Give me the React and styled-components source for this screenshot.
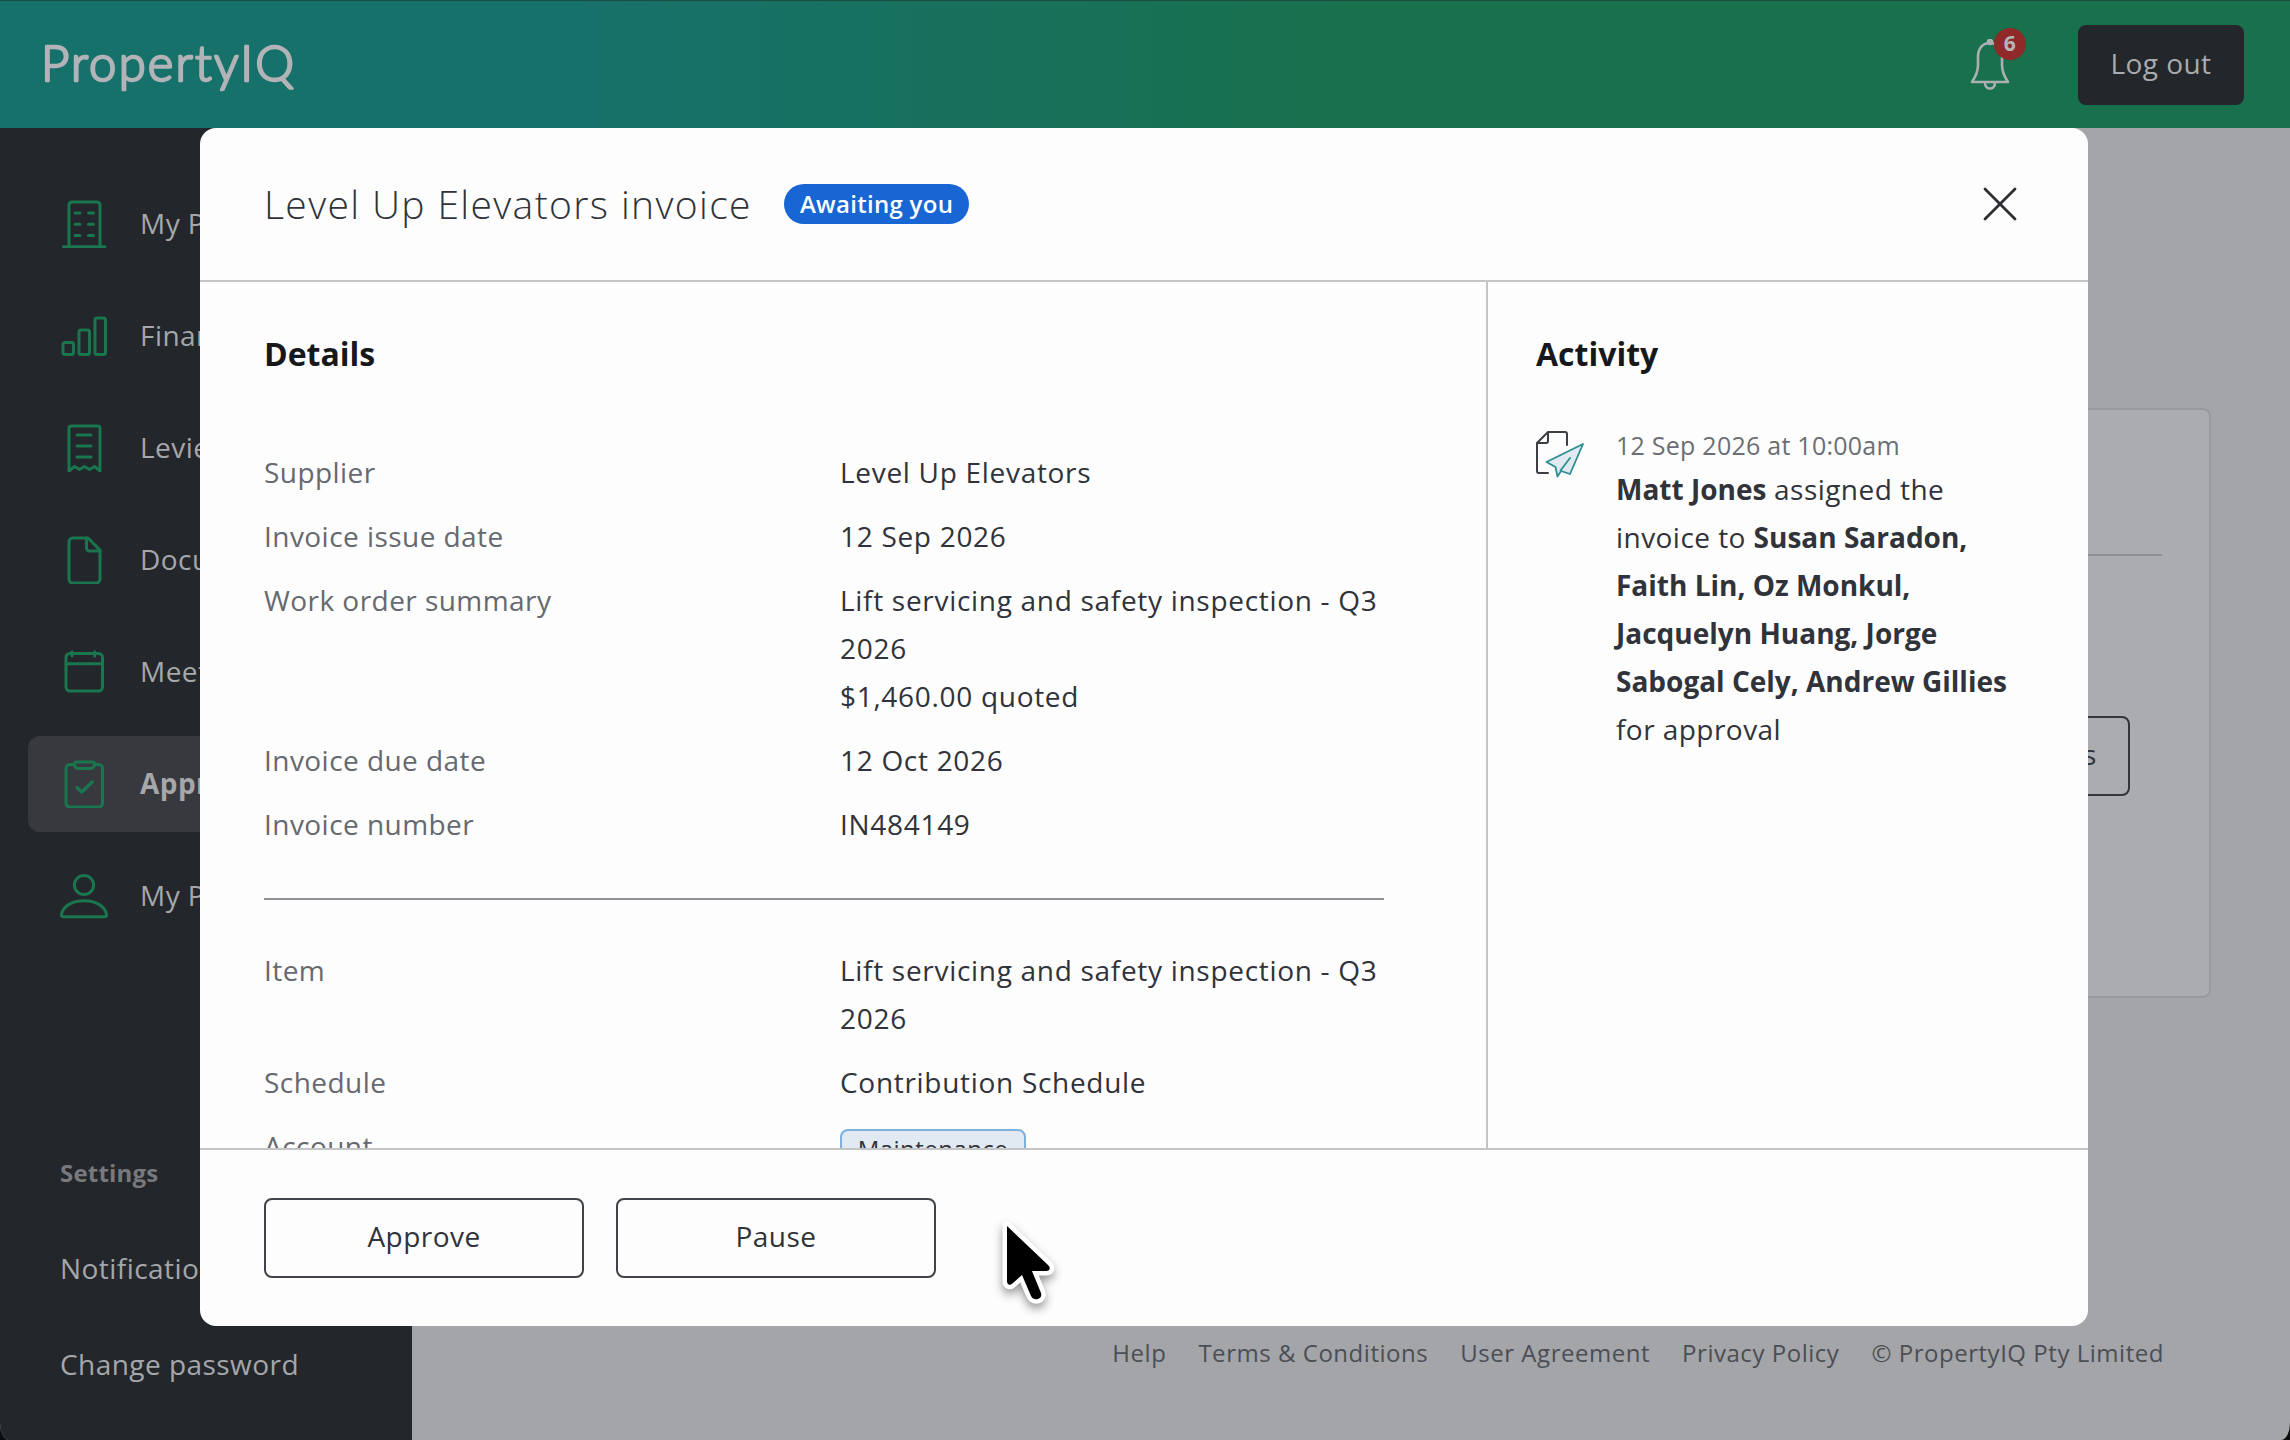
import React from "react";
import styled, { createGlobalStyle, css } from "styled-components";

const GlobalStyle = createGlobalStyle`
	* {
		box-sizing: border-box;
	}
	body {
		margin: 0;
		background: #0b0c0d;
		color: #303339;
		font-family: "Open Sans", "Noto Sans", sans-serif;
		font-size: 28px;
		font-weight: 500;
		line-height: 48px;
		letter-spacing: 0.45px;
	}
	button {
		font: inherit;
		letter-spacing: inherit;
	}
`;

const Page = styled.div`
	position: relative;
	display: flex;
	flex-direction: column;
	width: 2290px;
	height: 1440px;
	overflow: hidden;
	border-radius: 0 0 9px 9px / 0 0 17px 17px;
	background: #a4a5a9;
`;

const TopBar = styled.header`
	display: flex;
	align-items: center;
	flex: none;
	height: 128px;
	padding: 0 46px 0 40px;
	border-top: 1px solid #1d4b40;
	background: linear-gradient(90deg, #17716b 25%, #18704c 60%);
`;

const Logo = styled.svg`
	display: block;
	margin-right: auto;
	font-family: Lato, sans-serif;
	letter-spacing: 0;
`;

const Bell = styled.div`
	position: relative;
	width: 40px;
	height: 52px;
	margin-right: 68px;
	svg {
		display: block;
	}
`;

const Count = styled.span`
	position: absolute;
	top: -11px;
	right: -16px;
	width: 32px;
	height: 32px;
	border-radius: 50%;
	background: #8f2a28;
	color: #b4b5b7;
	font-size: 21px;
	font-weight: 700;
	line-height: 31px;
	text-align: center;
`;

const Button = styled.button`
	flex: none;
	width: ${({ $width }) => $width || 320}px;
	height: 80px;
	padding: 0 0 4px;
	border: 2px solid #3f4248;
	border-radius: 8px;
	background: transparent;
	color: #303339;
	${({ $dark }) =>
		$dark &&
		css`
			border-color: #23262b;
			background: #23262b;
			color: #a9abae;
		`}
`;

const Body = styled.div`
	display: flex;
	flex: 1;
	min-height: 0;
`;

const Sidebar = styled.aside`
	display: flex;
	flex-direction: column;
	flex: none;
	width: 412px;
	padding: 48px 28px 0;
	background: #23262b;
	color: #a5a7aa;
`;

const NavItem = styled.a`
	display: flex;
	align-items: center;
	gap: 32px;
	height: 96px;
	margin-bottom: 16px;
	padding-left: 32px;
	border-radius: 12px;
	white-space: nowrap;
	span {
		padding-bottom: 3px;
	}
	${({ $active }) =>
		$active &&
		css`
			background: #37393e;
			font-weight: 700;
		`}
`;

const NavIcon = styled.svg`
	flex: none;
	width: 48px;
	height: 48px;
	fill: none;
	stroke: #19764f;
	stroke-width: 3;
	stroke-linecap: round;
	stroke-linejoin: round;
`;

const SettingsTitle = styled.div`
	margin-top: 189px;
	padding-left: 32px;
	color: #77797c;
	font-size: 24px;
	font-weight: 700;
	letter-spacing: 0.2px;
`;

const SettingsLink = styled.a`
	margin: -1px 0 1px;
	padding: 48px 0 0 32px;
`;

const Main = styled.main`
	display: flex;
	flex-direction: column;
	flex: 1;
	padding: 280px 79px 0 80px;
`;

const Card = styled.section`
	display: flex;
	flex-direction: column;
	height: 590px;
	padding: 144px 47px 0;
	border: 2px solid #999a9e;
	border-radius: 8px;
	background: #aaacb0;
`;

const CardRule = styled.div`
	height: 2px;
	margin-bottom: 160px;
	background: #8f9094;
`;

const CardAction = styled.div`
	display: flex;
	justify-content: flex-end;
	padding-right: 32px;
	button {
		border-color: #33353a;
	}
`;

const FooterLinks = styled.footer`
	display: flex;
	justify-content: flex-end;
	gap: 32px;
	margin-top: 331px;
	padding-right: 47px;
	color: #4b4e54;
	font-size: 24px;
	letter-spacing: 0.53px;
	white-space: nowrap;
`;

const Overlay = styled.div`
	position: absolute;
	top: 128px;
	left: 200px;
`;

const Modal = styled.div`
	display: flex;
	flex-direction: column;
	width: 1888px;
	height: 1198px;
	border-radius: 16px;
	overflow: hidden;
	background: #fdfdfd;
`;

const ModalHeader = styled.div`
	display: flex;
	align-items: center;
	flex: none;
	height: 154px;
	padding: 0 64px;
	border-bottom: 2px solid #c4c5c7;
`;

const Title = styled.h1`
	margin: 0 32px 0 0;
	font-size: 39px;
	font-weight: 300;
	letter-spacing: 1.37px;
`;

const Status = styled.span`
	height: 40px;
	padding: 0 16px;
	border-radius: 20px;
	background: #1766d3;
	color: #fff;
	font-size: 24px;
	font-weight: 600;
	line-height: 39px;
	letter-spacing: 0.3px;
`;

const Close = styled.svg`
	width: 48px;
	height: 48px;
	margin-left: auto;
	fill: none;
	stroke: #2b2d31;
	stroke-width: 2.8;
	stroke-linecap: round;
`;

const ModalBody = styled.div`
	display: flex;
	flex: 1;
	min-height: 0;
	overflow: hidden;
`;

const Details = styled.div`
	width: 1288px;
	padding: 48px 102px 0 64px;
	border-right: 2px solid #c4c5c7;
`;

const Activity = styled.div`
	flex: 1;
	padding: 48px 0 0 48px;
`;

const Heading = styled.h2`
	margin: 0 0 70px;
	color: #17181b;
	font-size: 32px;
	font-weight: 700;
	letter-spacing: 0;
`;

const Row = styled.div`
	display: grid;
	grid-template-columns: 576px 1fr;
	margin-bottom: 16px;
`;

const Label = styled.div`
	color: #66696f;
`;

const Value = styled.div`
	letter-spacing: 0.7px;
	white-space: nowrap;
`;

const Rule = styled.div`
	height: 2px;
	margin: 50px 0 46px;
	background: #8f9297;
`;

const Tag = styled.div`
	width: 186px;
	height: 40px;
	margin-top: 7px;
	border: 2px solid #7db0df;
	border-radius: 8px;
	background: #e1eaf2;
	font-size: 24px;
	line-height: 36px;
	text-align: center;
`;

const Entry = styled.div`
	display: flex;
	gap: 32px;
	margin-top: -27px;
	svg {
		margin-top: 9px;
	}
`;

const EntryText = styled.div`
	white-space: nowrap;
	time {
		display: block;
		height: 44px;
		color: #6b6e73;
		font-size: 25px;
		letter-spacing: 0.25px;
	}
	b {
		font-weight: 700;
		letter-spacing: 0;
	}
`;

const ModalFooter = styled.div`
	display: flex;
	flex: none;
	gap: 32px;
	height: 178px;
	padding: 48px 64px 0;
	border-top: 2px solid #c4c5c7;
`;

const Pointer = styled.svg`
	position: absolute;
	top: 1216px;
	left: 997px;
	overflow: visible;
	filter: drop-shadow(0 5px 5px rgba(0, 0, 0, 0.4));
`;

const icons = {
	building: (
		<>
			<path d="M9 46V5a3 3 0 0 1 3-3h25a3 3 0 0 1 3 3v41M3.5 46.7h41.5" />
			<path d="M15 13h5M28.5 13h5M15 24.3h5M28.5 24.3h5M15 35.6h5M28.5 35.6h5" />
		</>
	),
	chart: (
		<>
			<rect x="3" y="30.5" width="10.5" height="12" rx="2" />
			<rect x="19" y="18" width="10.5" height="24.5" rx="2" />
			<rect x="35" y="6" width="10.5" height="36.5" rx="2" />
		</>
	),
	receipt: (
		<>
			<path d="M9 47V4.5A2.5 2.5 0 0 1 11.5 2h26A2.5 2.5 0 0 1 40 4.5V47l-5.5-4.5-5 3-5-3-5 3-5-3z" />
			<path d="M17 11h14M17 22h14M17 33h14" />
		</>
	),
	document: (
		<>
			<path d="M28 2H13a4 4 0 0 0-4 4v37a4 4 0 0 0 4 4h23a4 4 0 0 0 4-4V14z" />
			<path d="M26.5 2v10a3 3 0 0 0 3 3H40" />
		</>
	),
	calendar: (
		<>
			<rect x="6" y="5.5" width="36.5" height="37.5" rx="4" />
			<path d="M6 15.7h36.5M12 3.7V8M34.7 3.7V8" />
		</>
	),
	clipboard: (
		<>
			<path d="M14 4.5h-4a4 4 0 0 0-4 4V43a4 4 0 0 0 4 4h28.5a4 4 0 0 0 4-4V8.5a4 4 0 0 0-4-4h-4" />
			<path d="M16 2h17a2 2 0 0 1 1.5 3l-1 2a3 3 0 0 1-2.5 1.5H18A3 3 0 0 1 15.5 7l-1-2A2 2 0 0 1 16 2z" />
			<path strokeWidth="3.4" d="M17 27.5l4.7 4.5 10.5-10" />
		</>
	),
	person: (
		<>
			<circle cx="24" cy="13" r="9.6" />
			<path d="M3.5 44.7a2 2 0 0 1-2-2.5C3.5 34 12 28.7 24 28.7S44.5 34 46.5 42.2a2 2 0 0 1-2 2.5z" />
		</>
	)
};

const navItems = [
	{ label: "My Property", icon: "building" },
	{ label: "Financials", icon: "chart" },
	{ label: "Levies", icon: "receipt" },
	{ label: "Documents", icon: "document" },
	{ label: "Meetings", icon: "calendar" },
	{ label: "Approvals", icon: "clipboard", active: true },
	{ label: "My Profile", icon: "person" }
];

const invoice = [
	["Supplier", ["Level Up Elevators"]],
	["Invoice issue date", ["12 Sep 2026"]],
	[
		"Work order summary",
		["Lift servicing and safety inspection - Q3", "2026", "$1,460.00 quoted"]
	],
	["Invoice due date", ["12 Oct 2026"]],
	["Invoice number", ["IN484149"]]
];

const item = [
	["Item", ["Lift servicing and safety inspection - Q3", "2026"]],
	["Schedule", ["Contribution Schedule"]]
];

const links = [
	"Help",
	"Terms & Conditions",
	"User Agreement",
	"Privacy Policy",
	"© PropertyIQ Pty Limited"
];

const Rows = ({ rows }) =>
	rows.map(([label, lines]) => (
		<Row key={label}>
			<Label>{label}</Label>
			<Value>
				{lines.map(line => (
					<div key={line}>{line}</div>
				))}
			</Value>
		</Row>
	));

const TopNav = () => (
	<TopBar>
		<Logo width="270" height="80" viewBox="0 0 270 80">
			<text
				x="1"
				y="55.5"
				fontSize="49"
				fontWeight="300"
				fill="#b1b3b6"
				stroke="#b1b3b6"
				strokeWidth="2.4"
				strokeLinejoin="round"
				textLength="253"
			>
				PropertyIQ
			</text>
		</Logo>
		<Bell>
			<svg width="40" height="52" viewBox="0 0 40 52" fill="none" stroke="#adb0b2" strokeWidth="2.6" strokeLinejoin="round">
				<path d="M2 43c4-6 6-10 6-17V18C8 9 13 4 20 4s12 5 12 14v8c0 7 2 11 6 17z" />
				<path d="M15 43.5c0 8 10 8 10 0" />
				<circle cx="20" cy="3" r="2" fill="#adb0b2" />
			</svg>
			<Count>6</Count>
		</Bell>
		<Button $dark $width={166}>
			Log out
		</Button>
	</TopBar>
);

const InvoiceModal = () => (
	<Overlay>
		<Modal>
			<ModalHeader>
				<Title>Level Up Elevators invoice</Title>
				<Status>Awaiting you</Status>
				<Close viewBox="0 0 48 48">
					<path d="M9 9l30 30M39 9L9 39" />
				</Close>
			</ModalHeader>
			<ModalBody>
				<Details>
					<Heading>Details</Heading>
					<Rows rows={invoice} />
					<Rule />
					<Rows rows={item} />
					<Row>
						<Label>Account</Label>
						<Tag>Maintenance</Tag>
					</Row>
				</Details>
				<Activity>
					<Heading>Activity</Heading>
					<Entry>
						<svg width="48" height="48" viewBox="0 0 48 48" fill="none" strokeLinejoin="round" strokeLinecap="round">
							<path stroke="#3b3e44" strokeWidth="2" d="M31 15V4a2 2 0 0 0-2-2H12L1 13v28a2 2 0 0 0 2 2h9M12 2v9a2 2 0 0 1-2 2H1" />
							<path stroke="#2a8f90" strokeWidth="1.8" fill="#e1eaf0" d="M47 14L10.5 32l9 5 2 9.5 3.5-5.5 9 3zM34 28l-9.5 12.5" />
						</svg>
						<EntryText>
							<time>12 Sep 2026 at 10:00am</time>
							<b>Matt Jones</b> assigned the
							<br />
							invoice to <b>Susan Saradon,</b>
							<br />
							<b>Faith Lin, Oz Monkul,</b>
							<br />
							<b>Jacquelyn Huang, Jorge</b>
							<br />
							<b>Sabogal Cely, Andrew Gillies</b>
							<br />
							for approval
						</EntryText>
					</Entry>
				</Activity>
			</ModalBody>
			<ModalFooter>
				<Button>Approve</Button>
				<Button>Pause</Button>
			</ModalFooter>
		</Modal>
	</Overlay>
);

const App = () => (
	<Page>
		<GlobalStyle />
		<TopNav />
		<Body>
			<Sidebar>
				{navItems.map(({ label, icon, active }) => (
					<NavItem key={label} $active={active}>
						<NavIcon viewBox="0 0 48 48">{icons[icon]}</NavIcon>
						<span>{label}</span>
					</NavItem>
				))}
				<SettingsTitle>Settings</SettingsTitle>
				<SettingsLink>Notifications</SettingsLink>
				<SettingsLink>Change password</SettingsLink>
			</Sidebar>
			<Main>
				<Card>
					<CardRule />
					<CardAction>
						<Button $width={226}>View details</Button>
					</CardAction>
				</Card>
				<FooterLinks>
					{links.map(link => (
						<span key={link}>{link}</span>
					))}
				</FooterLinks>
			</Main>
		</Body>
		<InvoiceModal />
		<Pointer width="64" height="86" viewBox="0 0 64 86">
			<path
				d="M10 10v55c0 4 3 5 6 2l9-8 9 21c3 6 12 3 10-3l-9-22h14c4 0 5-3 2-6z"
				fill="#000"
				stroke="#fff"
				strokeWidth="9"
				strokeLinejoin="round"
				paintOrder="stroke"
			/>
		</Pointer>
	</Page>
);

export default App;
